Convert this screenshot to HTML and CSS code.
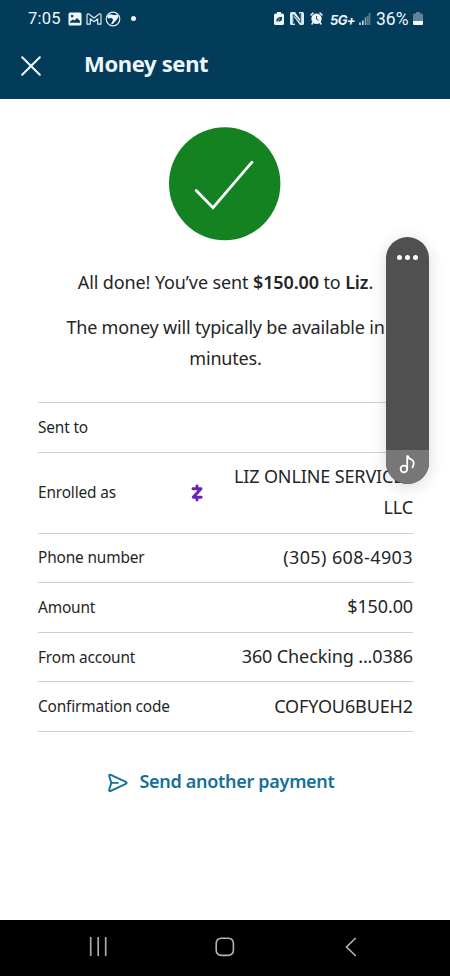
FILE: index.html
```html
<!DOCTYPE html>
<html lang="en">
<head>
<meta charset="utf-8">
<title>Money sent</title>
<link rel="stylesheet" href="styles.css">
</head>
<body>
<div class="screen">
  <header class="top">
    <div class="status">
      <div class="status-left">
        <span class="clock">7:05</span>
        <svg class="i-photo" width="14" height="14" viewBox="0 0 14 14"><path fill="#eef7fc" fill-rule="evenodd" d="M2 .5h10Q13.5.5 13.500 2v10q0 1.500-1.500 1.500H2Q.5 13.500.5 12V2Q.5.5 2 .5zM2 10.700h10V9L9 6 6.500 8.500 5 7.500 2 9.500zM3 3v2.300h2.300V3z"/></svg>
        <svg class="i-mail" width="16" height="12" viewBox="0 0 16 12"><path fill="none" stroke="#dcebf3" stroke-width="1.200" stroke-linejoin="round" d="M1 11.200V2.200Q1.200.6 2.800 1L8 5l5.200-4Q14.800.6 15 2.200v9h-3.300V5.800L8 8.700 4.300 5.800v5.400z"/></svg>
        <svg class="i-globe" width="16" height="16" viewBox="0 0 16 16"><circle cx="8" cy="8" r="6.800" fill="none" stroke="#e2eff5" stroke-width="1.200"/><path fill="#eef7fc" d="M2 5.200Q4 2.500 7 3.500l2 .8 3.500-.8 1.200 2L11.500 9l-3.800 4L6 13.300 8.200 8.500 6.500 7 3 7.500z"/></svg>
        <span class="dot"></span>
      </div>
      <div class="status-right">
        <svg width="10" height="13" viewBox="0 0 10 13"><path fill="#eef7fc" d="M3 0h4v1.500h1.500Q10 1.500 10 3v8.500Q10 13 8.500 13h-7Q0 13 0 11.500V3q0-1.500 1.500-1.500H3z"/><path fill="#033b5a" d="M2.500 10Q1.500 5 8 4.700 8.500 10 4 9.300z"/><path stroke="#eef7fc" stroke-width=".7" d="M3.500 9l2.700-2.600"/></svg>
        <svg class="i-nfc" width="14" height="13" viewBox="0 0 14 13"><path fill="#dcebf3" d="M1.500 0H5l5 7V2.500L9 1.200V0h3.500Q14 0 14 1.500v10q0 1.500-1.500 1.500H10L4 5v6l1 1v1H1.500Q0 13 0 11.500v-10Q0 0 1.500 0z"/><path fill="none" stroke="#033b5a" stroke-width=".9" d="M3.300 12V2.500l7.400 8V1"/></svg>
        <svg class="i-alarm" width="13" height="13" viewBox="0 0 13 13"><circle cx="6.500" cy="6.800" r="5.200" fill="#eef7fc"/><path stroke="#eef7fc" stroke-width="1.500" stroke-linecap="round" d="M1 3l2-2M12 3l-2-2M3 10.500l-1 1.500M10 10.500l1 1.500"/><path fill="none" stroke="#033b5a" stroke-width=".9" d="M6.500 4v3.100l2.200 1.300"/></svg>
        <span class="net">5G+</span>
        <svg class="i-signal" width="12" height="12" viewBox="0 0 12 12"><path stroke="#dcebf3" stroke-width="1.500" d="M1 12V9.500M3.800 12V7.500"/><path stroke="#8ba7b6" stroke-width="1.500" d="M6.500 12V4.500"/><path stroke="#567b91" stroke-width="1.800" d="M10.500 12V0M8.500 12V3"/></svg>
        <span class="pct">36%</span>
        <svg class="i-batt" width="10" height="13" viewBox="0 0 10 13"><path fill="#60859a" d="M3 0h4v1.500h1.500Q10 1.500 10 3v6H0V3q0-1.500 1.500-1.500H3z"/><path fill="#f5fbff" d="M0 9h10v2.500Q10 13 9 13H1q-1 0-1-1.500z"/></svg>
      </div>
    </div>
    <div class="bar">
      <svg class="close" width="20" height="20" viewBox="0 0 20 20"><path stroke="#f4fbff" stroke-width="2" stroke-linecap="round" d="M1.200 1.200l17.600 17.600M18.800 1.200L1.200 18.800"/></svg>
      <h1 class="title">Money sent</h1>
    </div>
  </header>
  <main class="content">
    <svg class="done" width="112" height="114" viewBox="0 0 112 114"><ellipse cx="55.700" cy="56.700" rx="55.700" ry="56.500" fill="#148221"/><path fill="none" stroke="#fff" stroke-width="2.800" stroke-linecap="round" d="M27.200 63.500L44 80.700 83 35.200"/></svg>
    <p class="msg msg-sent">All done! You’ve sent <b>$150.00</b> to <b>Liz</b>.</p>
    <p class="msg msg-time">The money will typically be available in minutes.</p>
    <dl class="details">
      <div class="row"><dt>Sent to</dt><dd></dd></div>
      <div class="row tall"><dt>Enrolled as</dt>
        <dd class="enrolled"><svg class="zelle" width="12" height="18" viewBox="0 0 12 18"><path fill="none" stroke="#6b20be" stroke-width="2.900" stroke-linejoin="round" stroke-linecap="round" d="M2 4.700h8L2.200 13.300h8M6 1.900v2M6 14.100v2"/></svg><span>LIZ ONLINE SERVICES LLC</span></dd></div>
      <div class="row"><dt>Phone number</dt><dd class="phone">(305) 608-4903</dd></div>
      <div class="row"><dt>Amount</dt><dd>$150.00</dd></div>
      <div class="row"><dt>From account</dt><dd class="account">360 Checking ...0386</dd></div>
      <div class="row"><dt>Confirmation code</dt><dd>COFYOU6BUEH2</dd></div>
    </dl>
    <a class="again"><svg width="20" height="20" viewBox="0 0 20 20"><path fill="none" stroke="#14709b" stroke-width="1.900" stroke-linejoin="round" stroke-linecap="round" d="M1.200 3Q1 1.200 2.800 1.900L17.800 8.900q1.700 1 0 2L2.800 17.800Q1 18.500 1.200 16.800L3.300 9.900 1.200 3M3.800 9.900h6"/></svg><span>Send another payment</span></a>
  </main>
  <nav class="nav">
    <svg width="18" height="19" viewBox="0 0 18 19"><path stroke="#aaa" stroke-width="1.700" d="M1.700 0v19M9.200 0v19M16.700 0v19"/></svg>
    <svg class="home" width="20" height="20" viewBox="0 0 20 20"><rect x="1.200" y="1.200" width="17.200" height="17.200" rx="5" fill="none" stroke="#b5b5b5" stroke-width="1.600"/></svg>
    <svg width="12" height="20" viewBox="0 0 12 20"><path fill="none" stroke="#b5b5b5" stroke-width="1.600" d="M10.800 1L1.500 10l9.300 9"/></svg>
  </nav>
  <aside class="volume">
    <div class="dots"><i></i><i></i><i></i></div>
    <div class="level"><svg width="17" height="19" viewBox="0 0 17 19"><g fill="none" stroke="#fff" stroke-width="1.800" stroke-linecap="round" stroke-linejoin="round"><circle cx="4.900" cy="14" r="3.300"/><path d="M8.200 14V1.200H9Q9.500 3.500 12 4.300 16.500 6.500 13.500 12.300"/></g></svg></div>
  </aside>
</div>
</body>
</html>
```
FILE: styles.css
```css
* { box-sizing: border-box; }
body { margin: 0; background: #fff; font-family: "Noto Sans", sans-serif; color: #252525; }
svg { display: block; flex: none; }
.screen { position: relative; width: 450px; height: 976px; display: flex; flex-direction: column; overflow: hidden; }
.top { height: 99px; flex: none; background: #033b5a; color: #eef7fc; }
.status { height: 37px; display: flex; justify-content: space-between; align-items: center; padding: 0 27px 0 28px; font-family: Roboto, sans-serif; }
.status-left, .status-right { display: flex; align-items: center; }
.clock { width: 40px; font-size: 16.500px; letter-spacing: .2px; white-space: nowrap; }
.i-mail { margin-left: 4px; }
.i-globe { margin-left: 3px; }
.dot { width: 5px; height: 5px; border-radius: 50%; background: #eef7fc; margin-left: 10px; }
.i-nfc { margin-left: 6px; }
.i-alarm { margin-left: 6px; }
.net { width: 26px; margin: 3px 3px 0 7px; font: italic 700 13px/14px Inter, sans-serif; letter-spacing: -.6px; white-space: nowrap; }
.pct { width: 37px; margin-left: 5px; font-size: 17.500px; white-space: nowrap; }
.bar { height: 62px; display: flex; align-items: center; padding: 0 0 5px 21px; }
.close { margin-top: 1px; }
.title { margin: -5px 0 0 43px; font-size: 22px; line-height: 30px; font-weight: 700; letter-spacing: -.35px; white-space: nowrap; }
.content { flex: 1; padding: 28px 37px 0 38px; }
.done { width: 112px; height: 114px; margin: 0 0 0 131px; }
.msg { margin: 0; font-size: 18px; line-height: 31px; letter-spacing: -.12px; text-align: center; white-space: nowrap; }
.msg b { font-weight: 600; }
.msg-sent { margin-top: 25.500px; }
.msg-time { margin-top: 14px; padding: 0 24px; letter-spacing: -.18px; white-space: normal; }
.details { margin: 28.500px 0 0; border-top: 1px solid #cfcfcf; }
.row { height: 49.600px; display: flex; align-items: center; justify-content: space-between; border-bottom: 1px solid #cfcfcf; white-space: nowrap; }
.row.tall { height: 81px; }
dt { font-size: 15.400px; line-height: 24px; letter-spacing: -.15px; padding-top: 1px; }
dd { margin: 0; font-size: 18px; line-height: 31px; letter-spacing: -.12px; text-align: right; padding-bottom: 1px; }
.phone { letter-spacing: .4px; }
.zelle { margin-top: 2px; }
.enrolled { display: flex; align-items: center; gap: 23px; }
.enrolled span { width: 187px; white-space: normal; }
.again { display: flex; align-items: center; justify-content: center; gap: 11px; margin: 34.500px 8px 0 0; color: #14709b; font-size: 18px; line-height: 30px; font-weight: 600; letter-spacing: -.3px; white-space: nowrap; }
.again svg { margin-top: 4px; }
.nav { height: 56px; flex: none; background: #000; display: flex; align-items: center; justify-content: space-between; padding: 0 93px 3px 89px; }
.home { margin-right: 3px; }
.volume { position: absolute; left: 386px; top: 237px; width: 43px; height: 247px; border-radius: 22px; background: #505050; overflow: hidden; box-shadow: 0 3px 16px rgba(0,0,0,.15); display: flex; flex-direction: column; justify-content: space-between; }
.dots { display: flex; justify-content: center; gap: 3px; padding-top: 18px; }
.dots i { width: 5px; height: 5px; border-radius: 50%; background: #fff; }
.level { height: 34px; background: #777; display: flex; justify-content: center; padding-top: 5px; }
```
